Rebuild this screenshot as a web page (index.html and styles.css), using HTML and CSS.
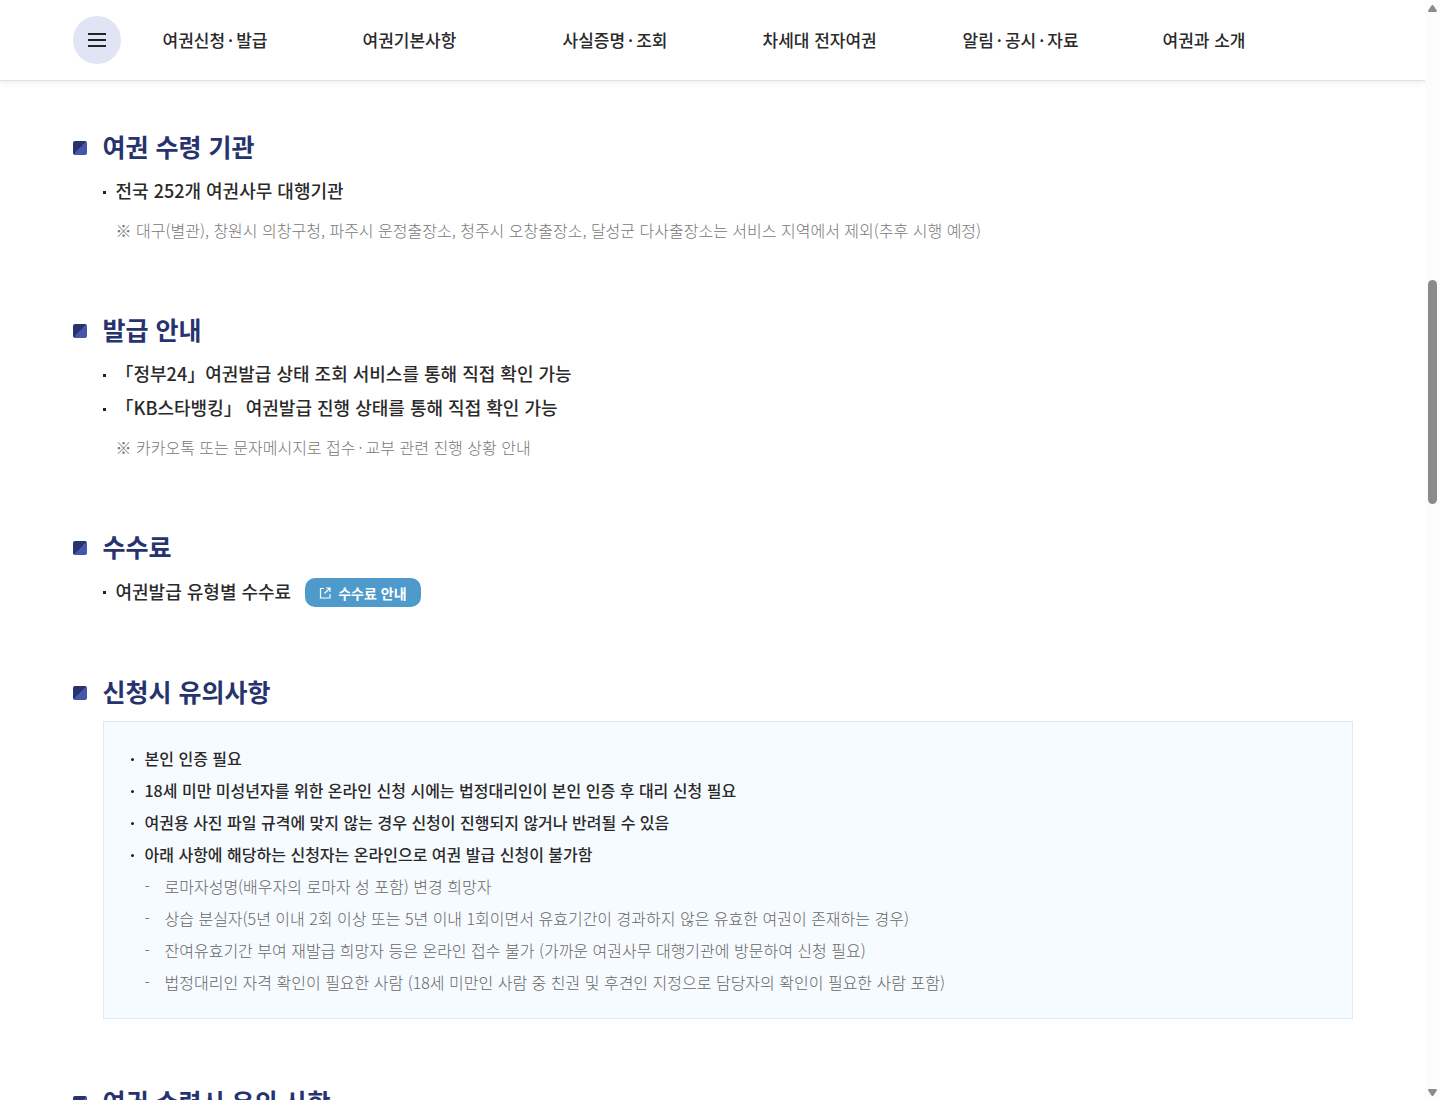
FILE: index.html
```html
<!DOCTYPE html>
<html lang="ko">
<head>
    <meta charset="UTF-8">
    <meta name="viewport" content="width=device-width, initial-scale=1.0">
    <title>여권발급 안내</title>
    <link rel="stylesheet" href="styles.css">
</head>
<body>
    <div class="page">
        <header class="header">
            <div class="inner header-inner">
                <button type="button" class="menu-btn" aria-label="전체메뉴">
                    <svg width="18" height="14" viewBox="0 0 18 14" fill="#222"><path d="M0 0h18v2H0zM0 6h18v2H0zM0 12h18v2H0z"/></svg>
                </button>
                <nav class="gnb">
                    <a href="#">여권신청<span class="dot">·</span>발급</a>
                    <a href="#">여권기본사항</a>
                    <a href="#">사실증명<span class="dot">·</span>조회</a>
                    <a href="#">차세대 전자여권</a>
                    <a href="#">알림<span class="dot">·</span>공시<span class="dot">·</span>자료</a>
                    <a href="#">여권과 소개</a>
                </nav>
            </div>
        </header>

        <main class="inner content">
            <section class="section">
                <h2>여권 수령 기관</h2>
                <ul class="list">
                    <li>전국 252개 여권사무 대행기관</li>
                </ul>
                <p class="note">※ 대구(별관), 창원시 의창구청, 파주시 운정출장소, 청주시 오창출장소, 달성군 다사출장소는 서비스 지역에서 제외(추후 시행 예정)</p>
            </section>

            <section class="section">
                <h2>발급 안내</h2>
                <ul class="list">
                    <li>「정부24」여권발급 상태 조회 서비스를 통해 직접 확인 가능</li>
                    <li>「KB스타뱅킹」 여권발급 진행 상태를 통해 직접 확인 가능</li>
                </ul>
                <p class="note">※ 카카오톡 또는 문자메시지로 접수<span class="dot">·</span>교부 관련 진행 상황 안내</p>
            </section>

            <section class="section">
                <h2>수수료</h2>
                <ul class="list">
                    <li>여권발급 유형별 수수료
                        <a href="#" class="btn-link">
                            <svg width="12" height="12" viewBox="0 0 12 12" fill="none" stroke="#fff" stroke-width="1.2"><path d="M5 1.500H1.500v9.500h9.500V7M7 1h4v4M11 1L5.500 6.500"/></svg>
                            수수료 안내
                        </a>
                    </li>
                </ul>
            </section>

            <section class="section">
                <h2>신청시 유의사항</h2>
                <div class="box">
                    <ul class="box-list">
                        <li>본인 인증 필요</li>
                        <li>18세 미만 미성년자를 위한 온라인 신청 시에는 법정대리인이 본인 인증 후 대리 신청 필요</li>
                        <li>여권용 사진 파일 규격에 맞지 않는 경우 신청이 진행되지 않거나 반려될 수 있음</li>
                        <li>아래 사항에 해당하는 신청자는 온라인으로 여권 발급 신청이 불가함</li>
                    </ul>
                    <ul class="dash-list">
                        <li>로마자성명(배우자의 로마자 성 포함) 변경 희망자</li>
                        <li>상습 분실자(5년 이내 2회 이상 또는 5년 이내 1회이면서 유효기간이 경과하지 않은 유효한 여권이 존재하는 경우)</li>
                        <li>잔여유효기간 부여 재발급 희망자 등은 온라인 접수 불가 (가까운 여권사무 대행기관에 방문하여 신청 필요)</li>
                        <li>법정대리인 자격 확인이 필요한 사람 (18세 미만인 사람 중 친권 및 후견인 지정으로 담당자의 확인이 필요한 사람 포함)</li>
                    </ul>
                </div>
            </section>

            <section class="section">
                <h2>여권 수령시 유의 사항</h2>
            </section>
        </main>
    </div>

    <div class="scrollbar" aria-hidden="true">
        <svg width="9" height="7" viewBox="0 0 9 7" fill="#8b8b8b"><path d="M3.500.6q1-1.200 2 0L8.800 5.500Q9 7 8 7H1Q0 7 .2 5.500z"/></svg>
        <div class="track"><div class="thumb"></div></div>
        <svg width="9" height="7" viewBox="0 0 9 7" fill="#8b8b8b"><path d="M3.500 6.400q1 1.200 2 0L8.800 1.500Q9 0 8 0H1Q0 0 .2 1.500z"/></svg>
    </div>
</body>
</html>
```
FILE: styles.css
```css
* {
    box-sizing: border-box;
}
body {
    display: flex;
    height: 100vh;
    margin: 0;
    overflow: hidden;
    background: #fff;
    color: #2a2a2a;
    font-family: 'Noto Sans CJK KR', 'Noto Sans', sans-serif;
    font-size: 16px;
}
h2, p, ul {
    margin: 0;
    padding: 0;
}
ul {
    list-style: none;
}
a {
    color: inherit;
    text-decoration: none;
}
.page {
    flex: 1;
    min-width: 0;
    overflow: hidden;
}
.inner {
    max-width: 1280px;
    margin: 0 auto;
}
.dot {
    margin: 0 3px;
}

/* header */
.header {
    border-bottom: 1px solid #e0e0e6;
    box-shadow: 0 2px 6px rgba(0, 0, 0, 0.07);
}
.header-inner {
    display: flex;
    align-items: center;
    gap: 42px;
    height: 80px;
}
.menu-btn {
    display: flex;
    flex-shrink: 0;
    align-items: center;
    justify-content: center;
    width: 48px;
    height: 48px;
    padding: 0;
    border: 0;
    border-radius: 50%;
    background: #e1e4f4;
    cursor: pointer;
}
.gnb {
    display: flex;
    flex: 1;
    min-width: 0;
}
.gnb a {
    flex: 0 0 200px;
    font-size: 17px;
    font-weight: 500;
    line-height: 32px;
    white-space: nowrap;
}
.gnb a:last-child {
    flex: 1;
}

/* content */
.content {
    padding-top: 47px;
}
.section {
    margin-bottom: 64px;
    padding-left: 30px;
}
.section h2 {
    display: flex;
    align-items: center;
    gap: 16px;
    margin: 0 0 8px -30px;
    padding-bottom: 2px;
    color: #27336f;
    font-size: 25px;
    font-weight: 700;
    line-height: 36px;
}
.section h2::before {
    content: '';
    width: 14px;
    height: 14px;
    margin-top: 4px;
    border-radius: 2px;
    background: linear-gradient(135deg, #27336f 50%, #4656ab 50%);
}
.list li {
    display: flex;
    align-items: center;
    padding-bottom: 2px;
    font-size: 18px;
    font-weight: 500;
    line-height: 32px;
}
.list li::before {
    content: '';
    width: 3px;
    height: 3px;
    margin: 4px 10px 0 0;
    background: #222;
}
.note {
    margin-top: 6px;
    padding-left: 13px;
    color: #777;
    font-weight: 300;
    line-height: 33px;
}
.btn-link {
    display: inline-flex;
    align-items: center;
    gap: 7px;
    height: 29px;
    margin: 4px 0 0 14px;
    padding: 0 14px;
    border-radius: 10px;
    background: #4e9acb;
    color: #fff;
    font-size: 14px;
    font-weight: 700;
    line-height: 28px;
}
.box {
    margin-top: 10px;
    padding: 20px 27px;
    border: 1px solid #dcebf5;
    background: #f6fbff;
    line-height: 32px;
}
.box-list li {
    display: flex;
    align-items: center;
    font-weight: 500;
}
.box-list li::before {
    content: '';
    width: 3px;
    height: 3px;
    margin: 2px 11px 0 0;
    border-radius: 50%;
    background: #222;
}
.dash-list li {
    display: flex;
    padding-left: 14px;
    color: #666;
    font-weight: 300;
}
.dash-list li::before {
    content: '-';
    width: 20px;
}

/* scrollbar */
.scrollbar {
    display: flex;
    flex-direction: column;
    align-items: center;
    width: 15px;
    padding: 5px 0 4px;
    background: #fcfcfc;
}
.track {
    flex: 1;
    padding-top: 268px;
}
.thumb {
    width: 9px;
    height: 224px;
    border-radius: 5px;
    background: #8b8b8b;
}
```
